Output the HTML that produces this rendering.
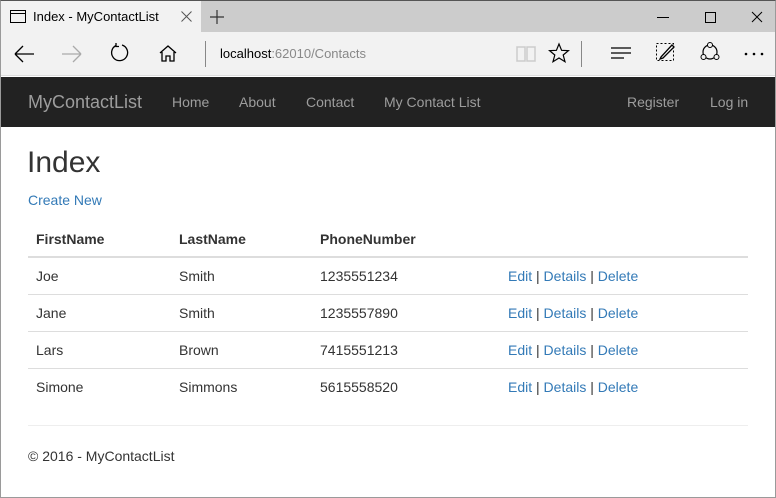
<!DOCTYPE html>
<html><head><style>
*{margin:0;padding:0;box-sizing:border-box}
body{width:776px;height:498px;overflow:hidden;font-family:"Liberation Sans",Arial,sans-serif;background:#fff;position:relative}
.frame{position:absolute;inset:0;border:1px solid #9a9a9a;border-top:1px solid #555}
.tabbar{position:absolute;left:1px;top:1px;right:1px;height:31px;background:#cccccc}
.tab{position:absolute;left:0;top:0;width:200px;height:31px;background:#f2f2f2;font-size:13px;color:#000}
.tool{position:absolute;left:1px;top:32px;right:1px;height:44px;background:#f2f2f2;border-bottom:1px solid #ddd}
.nav{position:absolute;left:1px;top:77px;right:1px;height:50px;background:#222;color:#9d9d9d}
.nav span{position:absolute;top:17px;font-size:14px}
.t{position:absolute;font-size:14px;color:#333}
a,.l{color:#337ab7}
.line{position:absolute;left:28px;width:720px;height:1px;background:#ddd}
</style></head><body>
<div class="tabbar">
 <div class="tab">
  <svg style="position:absolute;left:9px;top:9px" width="16" height="13"><rect x="0.5" y="0.5" width="15" height="12" fill="none" stroke="#000"/><line x1="0" y1="3.5" x2="16" y2="3.5" stroke="#000"/></svg>
  <span style="position:absolute;left:32px;top:8px">Index - MyContactList</span>
  <svg style="position:absolute;left:180px;top:10px" width="11" height="11"><path d="M0.5 0.5L10.5 10.5M10.5 0.5L0.5 10.5" stroke="#555" stroke-width="1"/></svg>
 </div>
 <svg style="position:absolute;left:208px;top:8px" width="16" height="16"><path d="M8 1V15M1 8H15" stroke="#333" stroke-width="1.2"/></svg>
 <svg style="position:absolute;left:656px;top:8px" width="110" height="16"><path d="M0 8.5H12" stroke="#000"/><rect x="48.5" y="3.5" width="10" height="10" fill="none" stroke="#000"/><path d="M95 3L105 13M105 3L95 13" stroke="#000"/></svg>
</div>
<div class="tool">
 <svg style="position:absolute;left:12px;top:12px" width="22" height="20"><path d="M2 10H21M2 10L10 2M2 10L10 18" fill="none" stroke="#000" stroke-width="1.3"/></svg>
 <svg style="position:absolute;left:60px;top:12px" width="22" height="20"><path d="M1 10H20M20 10L12 2M20 10L12 18" fill="none" stroke="#aaa" stroke-width="1.3"/></svg>
 <svg style="position:absolute;left:108px;top:10px" width="22" height="22"><path d="M7 3.5A8 8 0 1 0 13 3" fill="none" stroke="#000" stroke-width="1.3"/><path d="M7 1V4.5H10" fill="none" stroke="#000" stroke-width="1.3"/></svg>
 <svg style="position:absolute;left:157px;top:12px" width="20" height="20"><path d="M2 9L10 2L18 9M4 8V17H8V12H12V17H16V8" fill="none" stroke="#000" stroke-width="1.3"/></svg>
 <div style="position:absolute;left:204px;top:9px;width:1px;height:26px;background:#888"></div>
 <span style="position:absolute;left:219px;top:14px;font-size:13px;color:#000">localhost<span style="color:#888">:62010/Contacts</span></span>
 <svg style="position:absolute;left:515px;top:12px" width="20" height="20"><path d="M1 3H9V17H1ZM11 3H19V17H11Z" fill="none" stroke="#ccc" stroke-width="1.5"/></svg>
 <svg style="position:absolute;left:547px;top:10px" width="22" height="22"><path d="M11 2L13.6 8.3L20.5 8.6L15.2 13L17 19.7L11 16L5 19.7L6.8 13L1.5 8.6L8.4 8.3Z" fill="none" stroke="#000" stroke-width="1.2"/></svg>
 <div style="position:absolute;left:580px;top:9px;width:1px;height:26px;background:#888"></div>
 <svg style="position:absolute;left:610px;top:14px" width="22" height="16"><path d="M0 2H20M0 7H20M0 12H13" stroke="#000" stroke-width="1.3"/></svg>
 <svg style="position:absolute;left:654px;top:10px" width="22" height="22"><rect x="1.5" y="1.5" width="17" height="17" fill="none" stroke="#000" stroke-dasharray="2 2"/><path d="M6 15L17 3L19 5L8 16L5 17Z" fill="#fff" stroke="#000" stroke-width="1.3"/></svg>
 <svg style="position:absolute;left:698px;top:9px" width="22" height="22"><circle cx="11" cy="11" r="7" fill="none" stroke="#000" stroke-width="1.2"/><circle cx="11" cy="4" r="2.5" fill="#f2f2f2" stroke="#000"/><circle cx="4.5" cy="16" r="2.5" fill="#f2f2f2" stroke="#000"/><circle cx="17.5" cy="16" r="2.5" fill="#f2f2f2" stroke="#000"/></svg>
 <svg style="position:absolute;left:742px;top:19px" width="24" height="6"><circle cx="3" cy="3" r="1.3"/><circle cx="11" cy="3" r="1.3"/><circle cx="19" cy="3" r="1.3"/></svg>
</div>
<div class="nav">
 <span style="left:27px;top:15px;font-size:18px">MyContactList</span>
 <span style="left:171px">Home</span>
 <span style="left:238px">About</span>
 <span style="left:305px">Contact</span>
 <span style="left:383px">My Contact List</span>
 <span style="left:626px">Register</span>
 <span style="left:709px">Log in</span>
</div>
<div class="t" style="left:27px;top:146px;font-size:30px;color:#333">Index</div>
<div class="t l" style="left:28px;top:192px">Create New</div>
<div class="t" style="left:36px;top:231px;font-weight:bold">FirstName</div>
<div class="t" style="left:179px;top:231px;font-weight:bold">LastName</div>
<div class="t" style="left:320px;top:231px;font-weight:bold">PhoneNumber</div>
<div class="line" style="top:256px;height:2px"></div>
<div class="t" style="left:36px;top:268px">Joe</div><div class="t" style="left:179px;top:268px">Smith</div><div class="t" style="left:320px;top:268px">1235551234</div><div class="t" style="left:508px;top:268px"><span class="l">Edit</span> | <span class="l">Details</span> | <span class="l">Delete</span></div>
<div class="line" style="top:294px"></div>
<div class="t" style="left:36px;top:305px">Jane</div><div class="t" style="left:179px;top:305px">Smith</div><div class="t" style="left:320px;top:305px">1235557890</div><div class="t" style="left:508px;top:305px"><span class="l">Edit</span> | <span class="l">Details</span> | <span class="l">Delete</span></div>
<div class="line" style="top:331px"></div>
<div class="t" style="left:36px;top:342px">Lars</div><div class="t" style="left:179px;top:342px">Brown</div><div class="t" style="left:320px;top:342px">7415551213</div><div class="t" style="left:508px;top:342px"><span class="l">Edit</span> | <span class="l">Details</span> | <span class="l">Delete</span></div>
<div class="line" style="top:368px"></div>
<div class="t" style="left:36px;top:379px">Simone</div><div class="t" style="left:179px;top:379px">Simmons</div><div class="t" style="left:320px;top:379px">5615558520</div><div class="t" style="left:508px;top:379px"><span class="l">Edit</span> | <span class="l">Details</span> | <span class="l">Delete</span></div>
<div class="line" style="top:425px;background:#eee"></div>
<div class="t" style="left:28px;top:448px">© 2016 - MyContactList</div>
<div class="frame"></div>
</body></html>
